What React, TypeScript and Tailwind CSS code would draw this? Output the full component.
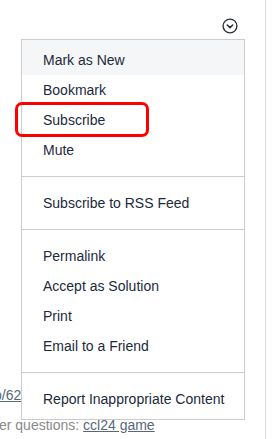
import React from "react";

const groups: string[][] = [
  ["Mark as New", "Bookmark", "Subscribe", "Mute"],
  ["Subscribe to RSS Feed"],
  ["Permalink", "Accept as Solution", "Print", "Email to a Friend"],
  ["Report Inappropriate Content"],
];

function ChevronCircle() {
  return (
    <svg width="16" height="16" viewBox="0 0 16 16" fill="none">
      <circle cx="8" cy="8" r="6.9" stroke="#2b2f36" strokeWidth="1.4" />
      <path d="M5.3 7 L8 9.6 L10.7 7" stroke="#2b2f36" strokeWidth="1.6" strokeLinecap="round" strokeLinejoin="round" />
    </svg>
  );
}

export default function App() {
  return (
    <div className="relative h-[439px] w-[276px] overflow-hidden bg-white font-['Liberation_Sans',Arial,sans-serif] text-[14px]">
      <div className="flex h-full">
        <div className="flex w-[265px] flex-col">
          {/* header with options toggle */}
          <div className="flex h-[39px] justify-end pr-[27px] pt-[18px]">
            <ChevronCircle />
          </div>
          {/* page content behind the menu */}
          <div className="mt-[346px] leading-[30px] text-[#8a8a8a]">
            <div className="ml-[-6px]">
              <a className="text-[#56687a] underline">p/62</a>
            </div>
            <div className="ml-[-1px]">
              er questions: <a className="text-[#56687a] underline">ccl24 game</a>
            </div>
          </div>
        </div>
        <div className="w-px bg-[#dddddd]" />
      </div>

      {/* dropdown menu */}
      <div className="absolute left-[21px] top-[39px] w-[224px] border border-[#cccccc] bg-white text-[#1c2a3a]">
        {groups.map((items, gi) => (
          <div
            key={gi}
            className={
              gi === 0
                ? "pb-[11px]"
                : gi === groups.length - 1
                ? "border-t border-[#cccccc] pb-[5px] pt-[11px]"
                : "border-t border-[#cccccc] py-[11px]"
            }
          >
            {items.map((label, i) =>
              gi === 0 && i === 0 ? (
                <div key={label} className="flex h-[35px] items-center bg-[#f5f6f8] pl-[21px] pt-[5px]">
                  {label}
                </div>
              ) : (
                <div key={label} className="flex h-[30px] items-center pl-[21px]">
                  {label}
                </div>
              )
            )}
          </div>
        ))}
      </div>

      {/* red annotation around Subscribe */}
      <div className="absolute left-[15px] top-[102px] h-[35px] w-[134px] rounded-[7px] border-[3px] border-[#ff0000]" />
    </div>
  );
}
